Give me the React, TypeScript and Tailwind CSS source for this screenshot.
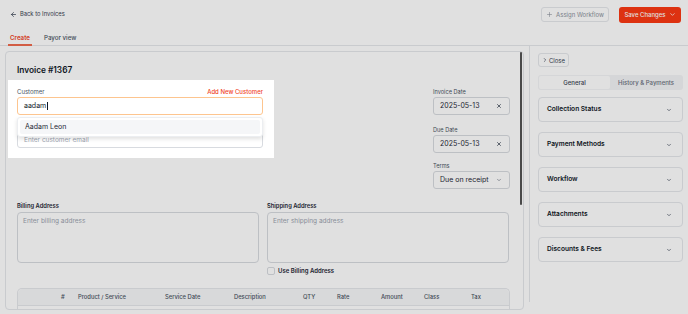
import { ArrowLeft, Plus, ChevronDown, ChevronRight, X } from 'lucide-react';

const sections = ['Collection Status', 'Payment Methods', 'Workflow', 'Attachments', 'Discounts & Fees'];

const columns = [
  { name: '#', w: 'w-[17px]' },
  { name: 'Product / Service', w: 'w-[87px]' },
  { name: 'Service Date', w: 'w-[69px]' },
  { name: 'Description', w: 'w-[69px]' },
  { name: 'QTY', w: 'w-[34px]' },
  { name: 'Rate', w: 'w-[44px]' },
  { name: 'Amount', w: 'w-[43px]' },
  { name: 'Class', w: 'w-[47px]' },
  { name: 'Tax', w: 'w-[38px]' },
];

function DateField({ label, value }: { label: string; value: string }) {
  return (
    <div>
      <div className="text-[5.6px] leading-[8px] text-[#4b5563]">{label}</div>
      <div className="mt-[1px] h-[18px] rounded-[3px] border border-[#d8dbe0] bg-white flex items-center justify-between pl-[6px] pr-[7px]">
        <span className="text-[7px] text-[#1f2937]">{value}</span>
        <X className="w-[6px] h-[6px] text-[#374151]" strokeWidth={3} />
      </div>
    </div>
  );
}

export default function App() {
  return (
    <div className="relative w-[688px] h-[314px] overflow-hidden bg-white font-['Inter',sans-serif] text-[#111827]">
      {/* header */}
      <div className="flex items-center justify-between pl-[10px] pr-[7px] pt-[7px] h-[22px]">
        <div className="flex items-center gap-[3px] text-[5.8px] text-[#374151]">
          <ArrowLeft className="w-[7px] h-[7px]" strokeWidth={2.5} />
          <span>Back to Invoices</span>
        </div>
        <div className="flex items-center gap-[10px]">
          <button className="h-[15px] w-[68px] rounded-[3px] border border-[#e5e7eb] flex items-center justify-center gap-[3px] text-[6px] text-[#8b919b]">
            <Plus className="w-[7px] h-[7px]" strokeWidth={2} />
            Assign Workflow
          </button>
          <button className="h-[16px] w-[62px] rounded-[3px] bg-[#fc3a14] flex items-center justify-center gap-[3px] text-[6px] font-medium text-white">
            Save Changes
            <ChevronDown className="w-[7px] h-[7px]" strokeWidth={2.5} />
          </button>
        </div>
      </div>

      {/* tabs */}
      <div className="mt-[8px] flex items-end gap-[8px] border-b border-[#e5e7eb] pl-[8px] h-[16px]">
        <div className="px-[2px] pb-[2px] border-b-2 border-[#f06a4e] text-[6.2px] font-semibold text-[#f0451f] -mb-px">Create</div>
        <div className="px-[4px] pb-[3px] text-[6.2px] font-medium text-[#4b5563]">Payor view</div>
      </div>

      <div className="flex">
        {/* main panel */}
        <div className="relative ml-[5px] mt-[5px] w-[519px] h-[259px] rounded-[4px] border border-[#e5e7eb]">
          <div className="absolute right-[1px] top-0 w-[2px] h-[153px] rounded-full bg-[#555]" />
          <div className="pl-[11px] pr-[13px] pt-[12px]">
            <div className="text-[8.3px] leading-[12px] font-semibold text-[#111827]">Invoice #1367</div>

            <div className="mt-[4px] flex items-start justify-between">
              {/* spotlight on customer field */}
              <div className="relative z-10 -ml-[9px] w-[266px] bg-white pl-[9px] pr-[11px] pt-[8px] pb-[10px] shadow-[0_0_0_9999px_rgba(0,0,0,0.12)]">
                <div className="flex justify-between text-[6px] leading-[8px]">
                  <span className="text-[#4b5563]">Customer</span>
                  <span className="font-medium text-[#f0451f]">Add New Customer</span>
                </div>
                <div className="mt-[1px] h-[18px] rounded-[3px] border-[1.5px] border-[#fdc58f] flex items-center px-[6px] text-[7px] text-[#111827]">
                  aadam<span className="ml-[0.5px] w-[0.75px] h-[8px] bg-[#111827]" />
                </div>
                <div className="mt-[15px] h-[18px] rounded-[3px] border border-[#d8dbe0] flex items-center px-[6px] pt-[3px] text-[6.5px] text-[#9ca3af]">
                  Enter customer email
                </div>
                <div className="absolute left-[9px] top-[37px] w-[246px] h-[20px] rounded-[3px] border border-[#eceef1] bg-white shadow-[0_2px_4px_rgba(0,0,0,0.12)] p-[2px]">
                  <div className="h-full rounded-[2px] bg-[#f5f6f8] flex items-center px-[5px] text-[7px] text-[#1f2937]">Aadam Leon</div>
                </div>
              </div>

              <div className="w-[77px] pt-[8px] flex flex-col gap-[11px]">
                <DateField label="Invoice Date" value="2025-05-13" />
                <DateField label="Due Date" value="2025-05-13" />
                <div className="-mt-[2px]">
                  <div className="text-[5.6px] leading-[8px] text-[#4b5563]">Terms</div>
                  <div className="mt-[1px] h-[18px] rounded-[3px] border border-[#d8dbe0] bg-white flex items-center justify-between pl-[6px] pr-[7px]">
                    <span className="whitespace-nowrap text-[7px] text-[#1f2937]">Due on receipt</span>
                    <ChevronDown className="w-[6px] h-[6px] text-[#6b7280]" strokeWidth={2.5} />
                  </div>
                </div>
              </div>
            </div>

            {/* addresses */}
            <div className="mt-[13px] flex gap-[8px]">
              <div className="w-[242px]">
                <div className="text-[5.8px] leading-[8px] font-semibold text-[#1f2937]">Billing Address</div>
                <div className="mt-[2px] h-[51px] rounded-[4px] border border-[#d8dbe0] px-[5px] pt-[4px] text-[6.5px] text-[#9ca3af]">Enter billing address</div>
              </div>
              <div className="w-[242px]">
                <div className="text-[5.8px] leading-[8px] font-semibold text-[#1f2937]">Shipping Address</div>
                <div className="mt-[2px] h-[51px] rounded-[4px] border border-[#d8dbe0] px-[5px] pt-[4px] text-[6.5px] text-[#9ca3af]">Enter shipping address</div>
                <div className="mt-[3px] flex items-center gap-[3px]">
                  <span className="w-[8px] h-[8px] rounded-[2px] border border-[#d8dbe0]" />
                  <span className="text-[6px] font-semibold text-[#1f2937]">Use Billing Address</span>
                </div>
              </div>
            </div>

            {/* line items */}
            <div className="mt-[13px] rounded-t-[5px] border-x border-t border-[#e5e7eb]">
              <div className="h-[17px] flex items-center pl-[43px] bg-[#f6f7f9] border-b border-[#e5e7eb] rounded-t-[5px] text-[5.8px] font-medium text-[#4b5563]">
                {columns.map((c) => (
                  <span key={c.name} className={c.w}>{c.name}</span>
                ))}
              </div>
              <div className="h-[4px]" />
            </div>
          </div>
        </div>

        {/* side panel */}
        <div className="ml-[5px] w-[159px] h-[256px] border-l border-[#e5e7eb] pl-[8px] pr-[5px] pt-[7px]">
          <button className="h-[14px] w-[31px] rounded-[3px] border border-[#e5e7eb] flex items-center justify-center gap-[1px] text-[6px] text-[#374151]">
            <ChevronRight className="w-[6px] h-[6px]" strokeWidth={2.5} />
            Close
          </button>
          <div className="mt-[8px] h-[15px] rounded-[3px] bg-[#f3f4f6] flex p-[1px] text-[6px] font-medium">
            <div className="w-[71px] rounded-[2px] bg-white flex items-center justify-center text-[#374151]">General</div>
            <div className="flex-1 flex items-center justify-center text-[#6b7280]">History &amp; Payments</div>
          </div>
          <div className="mt-[7px] flex flex-col gap-[10px]">
            {sections.map((s) => (
              <div key={s} className="h-[25px] rounded-[4px] border border-[#e5e7eb] flex items-center justify-between pl-[8px] pr-[10px]">
                <span className="text-[6.6px] font-semibold text-[#111827]">{s}</span>
                <ChevronDown className="w-[6px] h-[6px] text-[#374151]" strokeWidth={2.5} />
              </div>
            ))}
          </div>
        </div>
      </div>
    </div>
  );
}
